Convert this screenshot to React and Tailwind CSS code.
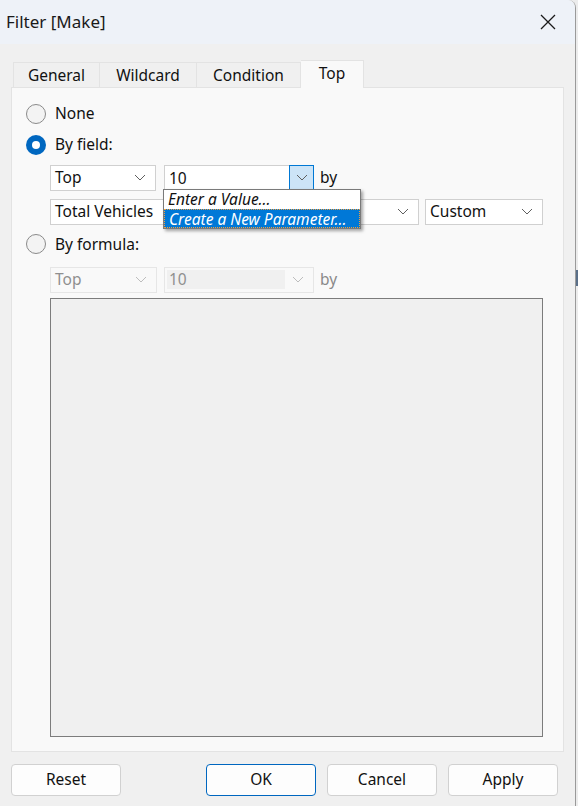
import React from "react";

const font = { fontFamily: '"Noto Sans", "Open Sans", Arial, sans-serif' };

const Chevron = ({ color = "#5f5f5f" }) => (
  <svg width="12" height="7" viewBox="0 0 12 7" fill="none">
    <path d="M1 1l5 5 5-5" stroke={color} strokeWidth="1" />
  </svg>
);

const Radio = ({ checked, label, className = "" }) => (
  <div className={`flex items-center gap-[9px] ${className}`}>
    {checked ? (
      <div className="w-[20px] h-[20px] rounded-full bg-[#0067c0] flex items-center justify-center">
        <div className="w-[8px] h-[8px] rounded-full bg-white" />
      </div>
    ) : (
      <div className="w-[20px] h-[20px] rounded-full border border-[#8a8a8a] bg-[#f3f3f3]" />
    )}
    <span className="text-[15.5px] text-[#111]">{label}</span>
  </div>
);

const Combo = ({ value, width, disabled, className = "" }) => (
  <div
    className={`h-[26px] flex items-center justify-between pl-[4px] pr-[9px] border ${
      disabled ? "border-[#e6e6e6] text-[#8f8f8f]" : "border-[#d0d0d0] text-[#111] bg-white"
    } ${className}`}
    style={{ width }}
  >
    <span className="text-[15.5px]">{value}</span>
    <Chevron color={disabled ? "#bdbdbd" : "#5f5f5f"} />
  </div>
);

const Button = ({ label, primary }) => (
  <button
    className={`w-[110px] h-[32px] rounded-[4px] bg-[#fdfdfd] text-[15.5px] text-[#111] border ${
      primary ? "border-[#0067c0]" : "border-[#d1d1d1]"
    }`}
  >
    {label}
  </button>
);

export default function App() {
  return (
    <div className="w-[578px] h-[806px] flex bg-[#ececec]" style={font}>
      {/* window */}
      <div className="w-[576px] h-[806px] flex flex-col bg-[#f0f0f0] border-r border-[#9a9a9a] rounded-tr-[8px] overflow-hidden">
        {/* title bar */}
        <div className="h-[44px] shrink-0 bg-[#eef2f8] flex items-center justify-between pl-[6px] pr-[19px]">
          <span className="text-[17px] text-[#1a1a1a]">Filter [Make]</span>
          <svg width="16" height="16" viewBox="0 0 16 16">
            <path d="M1 1l14 14M15 1L1 15" stroke="#1a1a1a" strokeWidth="1.3" />
          </svg>
        </div>

        {/* tabs */}
        <div className="flex items-end pl-[13px] mt-[16px] h-[27px]">
          <div className="w-[87px] h-[25px] pt-[2px] border border-b-0 border-[#e3e3e3] bg-[#f0f0f0] flex items-center justify-center text-[15.5px] text-[#111]">General</div>
          <div className="w-[97px] h-[25px] pt-[2px] border border-l-0 border-b-0 border-[#e3e3e3] flex items-center justify-center text-[15.5px] text-[#111]">Wildcard</div>
          <div className="w-[104px] h-[25px] pt-[2px] border border-l-0 border-b-0 border-[#e3e3e3] flex items-center justify-center text-[15.5px] text-[#111]">Condition</div>
          <div className="w-[63px] h-[28px] -mb-px border border-l-0 border-b-0 border-[#e3e3e3] bg-[#f9f9f9] relative z-10 flex items-center justify-center text-[15.5px] text-[#111] pb-[1px]">Top</div>
        </div>

        {/* panel */}
        <div className="mx-[11px] h-[665px] border border-[#e3e3e3] bg-[#f9f9f9] pl-[14px] pr-[13px] pt-[14px] flex flex-col">
          <Radio label="None" />
          <Radio checked label="By field:" className="mt-[8px]" />

          <div className="pl-[24px] mt-[8px] flex flex-col gap-[8px] relative">
            <div className="flex items-center">
              <Combo value="Top" width={106} />
              <div className="ml-[8px] w-[150px] h-[26px] flex border border-[#d0d0d0] bg-white">
                <span className="flex-1 pl-[4px] text-[15.5px] text-[#111] leading-[24px]">10</span>
                <div className="w-[25px] h-[26px] -mt-px -mr-px border border-[#0078d4] bg-[#cce4f7] flex items-center justify-center">
                  <Chevron />
                </div>
              </div>
              <span className="ml-[6px] text-[15.5px] text-[#111]">by</span>
            </div>
            <div className="flex items-center">
              <Combo value="Total Vehicles" width={369} />
              <Combo value="Custom" width={118} className="ml-[6px]" />
            </div>

            {/* dropdown list */}
            <div className="absolute left-[137px] top-[24px] w-[198px] border border-[#7a7a7a] bg-white shadow-[2px_2px_3px_rgba(0,0,0,0.35)] z-20">
              <div className="h-[19px] pl-[4px] text-[15.5px] italic text-[#111] leading-[19px]">Enter a Value...</div>
              <div className="h-[19px] pl-[4px] text-[15.5px] italic text-white leading-[18px] bg-[#0078d7] border border-dotted border-[#f0a040]">Create a New Parameter...</div>
            </div>
          </div>

          <Radio label="By formula:" className="mt-[8px]" />

          <div className="pl-[24px] mt-[11px] flex flex-col">
            <div className="flex items-center">
              <Combo value="Top" width={107} disabled />
              <div className="ml-[7px] w-[150px] h-[26px] flex items-center border border-[#e6e6e6] pl-[2px] pr-[9px]">
                <span className="w-[118px] h-[19px] bg-[#f0f0f0] pl-[2px] text-[15.5px] text-[#8f8f8f] leading-[19px]">10</span>
                <span className="flex-1" />
                <Chevron color="#bdbdbd" />
              </div>
              <span className="ml-[6px] text-[15.5px] text-[#8a8a8a]">by</span>
            </div>
            <div className="mt-[5px] w-[493px] h-[439px] border border-[#7c7c7c] bg-[#f0f0f0]" />
          </div>
        </div>

        {/* buttons */}
        <div className="flex items-center px-[11px] mt-[12px]">
          <Button label="Reset" />
          <div className="flex-1" />
          <div className="flex gap-[11px] pr-[6px]">
            <Button label="OK" primary />
            <Button label="Cancel" />
            <Button label="Apply" />
          </div>
        </div>
      </div>
      <div className="flex-1 flex flex-col">
        <div className="h-[270px]" />
        <div className="h-[16px] bg-[#5a6f88]" />
      </div>
    </div>
  );
}
